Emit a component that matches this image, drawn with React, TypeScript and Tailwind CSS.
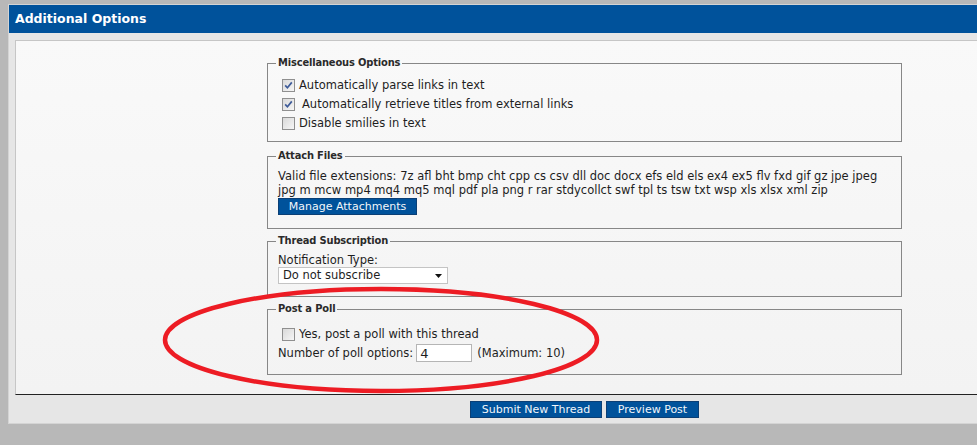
import type { ReactNode } from 'react';

function CheckBox({ checked }: { checked?: boolean }) {
  return (
    <span className="relative inline-block h-[13px] w-[13px] shrink-0 border border-[#8f8f8f] bg-linear-to-br from-[#d9d9d9] to-[#f6f6f6]">
      {checked && (
        <svg viewBox="0 0 11 11" className="absolute left-0 top-0 h-[11px] w-[11px]">
          <path d="M2.2 5.4 L4.4 7.8 L8.8 2.4" fill="none" stroke="#3d5a98" strokeWidth="1.7" />
        </svg>
      )}
    </span>
  );
}

function Group({ title, className, children }: { title: string; className?: string; children: ReactNode }) {
  return (
    <fieldset className={`mx-auto w-[635px] border border-[#878787] pl-[10px] pr-[8px] ${className ?? ''}`}>
      <legend className="-ml-[2px] px-[2px] font-['DejaVu_Sans_Condensed','Liberation_Sans',sans-serif] text-[11px] font-bold leading-[14px] tracking-[-0.15px] text-[#2a2a2a]">
        {title}
      </legend>
      {children}
    </fieldset>
  );
}

function BlueButton({ label, width }: { label: string; width: string }) {
  return (
    <button className={`${width} h-[17px] border border-[#0b3f75] bg-[#00529b] text-center text-[11px] leading-[15px] text-[#f2f6fa]`}>
      {label}
    </button>
  );
}

const extensions =
  '7z afl bht bmp cht cpp cs csv dll doc docx efs eld els ex4 ex5 flv fxd gif gz jpe jpeg';
const extensions2 = 'jpg m mcw mp4 mq4 mq5 mql pdf pla png r rar stdycollct swf tpl ts tsw txt wsp xls xlsx xml zip';

export default function App() {
  return (
    <div className="relative h-[445px] w-[977px] overflow-hidden bg-[#b8b8b8] font-['DejaVu_Sans',Verdana,sans-serif] text-[11.5px] text-[#1e1e1e]">
      <div className="ml-[8px] mt-[4px] w-[1153px] border border-[#d4d4d4] bg-[#e6e6e6]">
        <div className="h-[28px] bg-[#00529b] pl-[6px] text-[12.5px] font-bold leading-[28px] text-white">
          Additional Options
        </div>

        <div className="px-[6px] pt-[7px]">
          <div className="border border-[#c6c6c6] border-b-[#222222] bg-linear-to-b from-[#f9f9f9] to-[#f3f3f3] pb-[19px] pt-[15px]">
            <Group title="Miscellaneous Options" className="pb-[8px] pt-[6px]">
              <label className="flex h-[19px] items-center gap-[4px] pl-[4px]">
                <CheckBox checked />
                <span>Automatically parse links in text</span>
              </label>
              <label className="flex h-[19px] items-center gap-[4px] pl-[4px]">
                <CheckBox checked />
                <span className="pl-[3px]">Automatically retrieve titles from external links</span>
              </label>
              <label className="flex h-[19px] items-center gap-[4px] pl-[4px]">
                <CheckBox />
                <span>Disable smilies in text</span>
              </label>
            </Group>

            <Group title="Attach Files" className="mt-[7px] pb-[13px] pt-[6px]">
              <p className="leading-[14px]">
                Valid file extensions: {extensions}
                <br />
                {extensions2}
              </p>
              <div className="mt-[1px]">
                <BlueButton label="Manage Attachments" width="w-[139px]" />
              </div>
            </Group>

            <Group title="Thread Subscription" className="mt-[5px] pb-[12px] pt-[6px]">
              <div className="leading-[13px]">Notification Type:</div>
              <div className="flex h-[17px] w-[170px] items-center justify-between border border-[#c4c4c4] bg-white pl-[4px] pr-[5px]">
                <span>Do not subscribe</span>
                <svg viewBox="0 0 7 4" className="h-[4px] w-[7px]">
                  <path d="M0 0 H7 L3.5 4 Z" fill="#111" />
                </svg>
              </div>
            </Group>

            <Group title="Post a Poll" className="mt-[5px] pb-[12px] pt-[9px]">
              <label className="flex h-[19px] items-center gap-[4px] pl-[4px]">
                <CheckBox />
                <span>Yes, post a poll with this thread</span>
              </label>
              <div className="flex h-[18px] items-center">
                <span>Number of poll options:</span>
                <div className="ml-[3px] flex h-[18px] w-[56px] items-center border border-[#b5b5b5] bg-white pl-[3px] text-[13px]">
                  4
                </div>
                <span className="ml-[5px]">(Maximum: 10)</span>
              </div>
            </Group>
          </div>
        </div>

        <div className="flex justify-center gap-[4px] pb-[5px] pt-[6px]">
          <BlueButton label="Submit New Thread" width="w-[132px]" />
          <BlueButton label="Preview Post" width="w-[93px]" />
        </div>
      </div>

      {/* hand-drawn red highlight around the poll box */}
      <svg className="pointer-events-none absolute left-0 top-0 h-[445px] w-[977px]" viewBox="0 0 977 445">
        <ellipse cx="381" cy="340" rx="216" ry="51" fill="none" stroke="#ed1c24" strokeWidth="4.5" />
      </svg>
    </div>
  );
}
